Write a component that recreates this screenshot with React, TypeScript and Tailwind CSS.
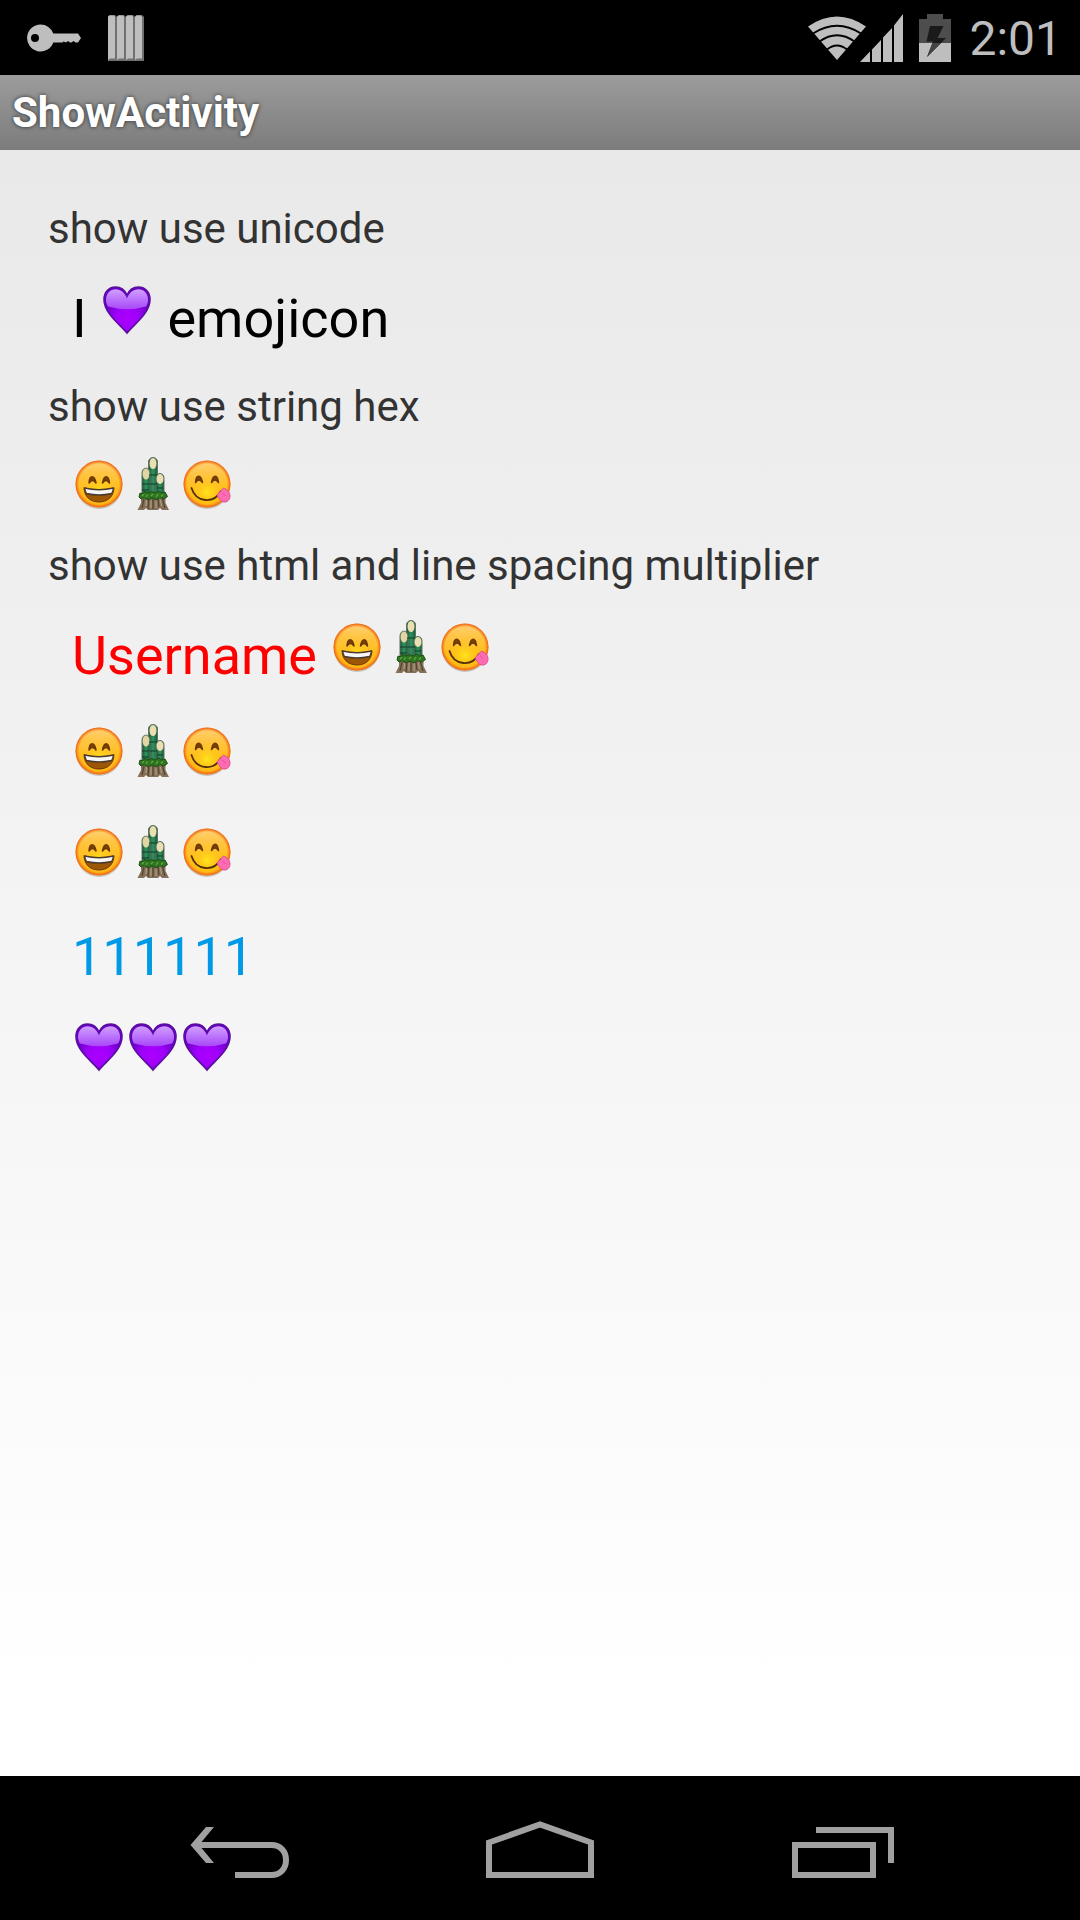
import React from "react";

function FaceBase() {
  return (
    <>
      <defs>
        <linearGradient id="faceFill" x1="0" y1="0" x2="0" y2="1">
          <stop offset="0" stopColor="#ffd27a" />
          <stop offset=".25" stopColor="#ffc648" />
          <stop offset=".6" stopColor="#ffbe1c" />
          <stop offset="1" stopColor="#ffb014" />
        </linearGradient>
        <radialGradient id="faceGlow" cx=".5" cy=".7" r=".4">
          <stop offset="0" stopColor="#ffec1c" stopOpacity=".85" />
          <stop offset="1" stopColor="#ffc010" stopOpacity="0" />
        </radialGradient>
        <radialGradient id="faceRim" cx=".5" cy=".5" r=".5">
          <stop offset=".84" stopColor="#fb8a1a" stopOpacity="0" />
          <stop offset=".95" stopColor="#f2701c" stopOpacity=".85" />
          <stop offset="1" stopColor="#e8641c" />
        </radialGradient>
      </defs>
      <ellipse cx="27" cy="29" rx="23" ry="23" fill="#000" opacity=".18" />
      <circle cx="27" cy="27" r="23.500" fill="url(#faceFill)" />
      <circle cx="27" cy="27" r="21" fill="url(#faceGlow)" />
      <circle cx="27" cy="27" r="23.500" fill="url(#faceRim)" />
    </>
  );
}

function Grin() {
  return (
    <svg viewBox="0 0 54 54" className="size-[54px] shrink-0" role="img" aria-label="smile">
      <FaceBase />
      <path d="M17 26C17.500 17.500 22.500 17.500 24 26C21.500 22.500 19.500 22.500 17 26Z" fill="#7a4208" stroke="#6b3805" strokeWidth="1.500" strokeLinejoin="round" />
      <path d="M30.500 26C32 17.500 36.500 17.500 37.500 26C35 22.500 33 22.500 30.500 26Z" fill="#7a4208" stroke="#6b3805" strokeWidth="1.500" strokeLinejoin="round" />
      <path d="M12 31Q27 34.500 42 31C41.500 40 35.500 45 27 45S12.500 40 12 31Z" fill="#9c5606" stroke="#6e3a04" strokeWidth="1" />
      <path d="M12.500 31Q27 34.500 41.500 31C41 34 40.500 35 39.500 36.500Q27 39.500 14.500 36.500C13.500 35 13 33 12.500 31Z" fill="#f7f7f7" stroke="#4a3a30" strokeWidth="1.300" />
    </svg>
  );
}

function Yum() {
  return (
    <svg viewBox="0 0 54 54" className="size-[54px] shrink-0" role="img" aria-label="yum">
      <FaceBase />
      <path d="M15.500 25.500C16 17 21 17 22.500 25.500C20 22 18 22 15.500 25.500Z" fill="#7a4208" stroke="#6b3805" strokeWidth="1.500" strokeLinejoin="round" />
      <path d="M31.500 25.500C33 17 37.500 17 38.500 25.500C36 22 34 22 31.500 25.500Z" fill="#7a4208" stroke="#6b3805" strokeWidth="1.500" strokeLinejoin="round" />
      <path d="M11.500 31C16 46 34 47 41 34" fill="none" stroke="#543005" strokeWidth="1.800" strokeLinecap="round" />
      <path d="M37 38L43.500 31C47 32.500 50 35 50 39C50 43 47 45.500 43.500 45C40.500 44 39 41.500 37 38Z" fill="#fb6cb2" stroke="#e0508f" strokeWidth="1" />
      <path d="M42 35.500L45.500 39" stroke="#e0508f" strokeWidth="1" />
    </svg>
  );
}

function Pine() {
  return (
    <svg viewBox="0 0 54 54" className="size-[54px] shrink-0" role="img" aria-label="pine decoration">
      <defs>
        <linearGradient id="stalk" x1="0" y1="0" x2="1" y2="0">
          <stop offset="0" stopColor="#1c5238" />
          <stop offset=".5" stopColor="#2f9560" />
          <stop offset="1" stopColor="#1a5838" />
        </linearGradient>
      </defs>
      <path d="M22.500 5C22.500-1 31.500-1 31.500 5V38H22.500Z" fill="url(#stalk)" stroke="#66705e" strokeWidth="1" />
      <path d="M16 16C16 9.500 24 9.500 24 16V38H16Z" fill="url(#stalk)" stroke="#66705e" strokeWidth="1" />
      <path d="M30 21C30 15 38 15 38 21V38H30Z" fill="url(#stalk)" stroke="#66705e" strokeWidth="1" />
      <ellipse cx="27" cy="6.500" rx="3.500" ry="5.500" fill="#eadfb2" />
      <ellipse cx="20" cy="17" rx="3.500" ry="5.500" fill="#e2d5a4" />
      <ellipse cx="34" cy="22" rx="3.500" ry="5" fill="#eadfb2" />
      <path d="M23 18H31M23.500 27H31M16 27H23M16 33H23M31 31H37" stroke="#0f3d28" strokeWidth="1" />
      <path d="M15 41V46L11.500 53H18L20 51L22 53H32L34 51L36 53H43L39.500 46V41Z" fill="#85705a" />
      <path d="M18 42L16 51M23 42L22 52M27 42V52M32 42L33 50M36.500 42L39 51" stroke="#54432f" strokeWidth="1.200" />
      <path d="M20.500 43L20 49M25 43V51M30 43V51M34.500 43L35.500 49" stroke="#b09c80" strokeWidth="1.200" />
      <path d="M13 40L14 36L17 37L19 34L22 36L26 34.500L29 36L33 34L36 36L39 35L41.500 39.500L38 42L34 40.500L30 43L26 41L22 43L18 40.500L15 42Z" fill="#2f7420" stroke="#1f4f16" strokeWidth="1" />
      <path d="M16 39L18 37M20 40L21.500 37.500M25 39L27 37M30 40L32 37M35 39.500L37 37.500" stroke="#5fae3c" strokeWidth="1.200" />
    </svg>
  );
}

function Heart() {
  return (
    <svg viewBox="0 0 54 54" className="size-[54px] shrink-0" role="img" aria-label="purple heart">
      <defs>
        <radialGradient id="heartFill" cx=".5" cy=".68" r=".5">
          <stop offset="0" stopColor="#ac00ff" />
          <stop offset=".5" stopColor="#9e00fa" />
          <stop offset="1" stopColor="#6a00c4" />
        </radialGradient>
        <linearGradient id="heartShine" x1="0" y1="0" x2="0" y2="1">
          <stop offset="0" stopColor="#d0a0ff" />
          <stop offset="1" stopColor="#a848f8" />
        </linearGradient>
      </defs>
      <path d="M27 50C22 43 4 31 4 16.500C4 8.500 9.500 4 15.500 4C21 4 25 7.500 27 12C29 7.500 33 4 38.500 4C44.500 4 50 8.500 50 16.500C50 31 32 43 27 50Z" fill="url(#heartFill)" stroke="#58109c" strokeWidth="1.600" />
      <path d="M6 17C6 10 10.500 6.200 15.500 6.200C21 6.200 25 10 27 15.500C29 10 33 6.200 38.500 6.200C43.500 6.200 48 10 48 17C48 20 47 22 46 23.500Q27 29 8 23.500C7 22 6 20 6 17Z" fill="url(#heartShine)" />
    </svg>
  );
}

function Faces() {
  return (
    <>
      <Grin />
      <Pine />
      <Yum />
    </>
  );
}

function StatusBar() {
  return (
    <header className="flex h-[75px] items-center justify-between bg-black pr-[18px] pl-[27px] text-[#bebebe]">
      <div className="flex items-center gap-[27px] pt-px">
        <svg viewBox="0 0 54 28" className="h-7 w-[54px]" fill="currentColor" aria-label="VPN">
          <path fillRule="evenodd" d="M13.500 0.500A13.500 13.500 0 0 1 26.300 9.500H51L54 14L51 18.500H48.500L46.500 17L44.500 18.500H43L41 17L39 18.500L36.500 17.500L35.500 18.500H26.300A13.500 13.500 0 1 1 13.500 0.500ZM8 10A4 4 0 1 0 8 18A4 4 0 0 0 8 10Z" />
        </svg>
        <svg viewBox="0 0 36 46" className="h-[46px] w-9" aria-label="Notification">
          {[0, 9, 18, 27].map((x) => (
            <g key={x}>
              <path d={`M${x} 1.500L${x + 2} 0H${x + 7}L${x + 9} 2V46H${x}Z`} fill="#707070" />
              <path d={`M${x} 2L${x + 1} 0.500H${x + 6}L${x + 7} 2V43.500H${x + 2}L${x} 45Z`} fill="#bebebe" />
            </g>
          ))}
        </svg>
      </div>
      <div className="flex items-center">
        <svg viewBox="0 0 96 48" className="h-12 w-24" fill="currentColor" aria-label="Wi-Fi and signal">
          <path d="M0 12.500Q29 -7.500 58 12.500L29 46Z" />
          <path d="M5 19.500Q29 4 53 19.500M11.500 27.500Q29 15 46.500 27.500M19 35.500Q29 27.500 39 35.500" fill="none" stroke="#000" strokeWidth="2" />
          <path d="M52 48L62 37.500V48ZM64 35.500L73 26V48H64ZM75 23.500L84 14V48H75ZM86 11.500L95 0V48H86Z" />
        </svg>
        <svg viewBox="0 0 32 48" className="ml-[15px] h-12 w-8" aria-label="Battery charging">
          <path d="M0 5H8V0H24V5H32V29H0Z" fill="#4d4d4d" />
          <path d="M0 29H32V48H0Z" fill="#bebebe" />
          <path d="M11 12H24.500L18.500 24H27L8 43L14 27.500H7.500Z" fill="#1a1a1a" />
          <path d="M13.500 29H22L8 43Z" fill="#444" />
        </svg>
        <time className="ml-[18px] pt-0.5 text-[48px] leading-[56px]">2:01</time>
      </div>
    </header>
  );
}

function Label({ children }: { children: React.ReactNode }) {
  return <h2 className="text-[42px] leading-[50px] text-[#333]">{children}</h2>;
}

function NavBar() {
  return (
    <nav className="flex h-36 items-center justify-center gap-[120px] bg-black text-[#a0a0a0]">
      <button type="button" aria-label="Back">
        <svg viewBox="0 0 168 144" className="h-36 w-[168px]" fill="none" stroke="currentColor" strokeWidth="6">
          <path d="M28 69H103.500C112 69 118 75 118 84S112 99 103.500 99H67" />
          <path d="M38 51H46L31 69L46 87H38L22.500 69Z" fill="currentColor" stroke="none" />
        </svg>
      </button>
      <button type="button" aria-label="Home">
        <svg viewBox="0 0 168 144" className="h-36 w-[168px]" fill="none" stroke="currentColor" strokeWidth="6">
          <path d="M33 99V66.500L84 48.500L135 66.500V99Z" />
        </svg>
      </button>
      <button type="button" aria-label="Recent apps">
        <svg viewBox="0 0 168 144" className="h-36 w-[168px]" fill="none" stroke="currentColor" strokeWidth="6">
          <path d="M51 69H129V99H51ZM72 54H147V87" />
        </svg>
      </button>
    </nav>
  );
}

export default function App() {
  return (
    <div className="flex min-h-screen flex-col font-[Roboto,sans-serif]">
      <StatusBar />
      <div className="flex h-[75px] items-center bg-linear-to-b from-[#9c9c9c] to-[#7c7c7c] px-3">
        <h1 className="text-[42px] leading-[50px] font-bold text-white [text-shadow:0_0_4px_#000000b0]">ShowActivity</h1>
      </div>
      <main className="flex grow flex-col bg-linear-to-b from-[#e9e9e9] to-white to-95% px-12 pt-[54px]">
        <Label>show use unicode</Label>
        <p className="mt-[29px] flex items-baseline px-6 text-[54px] leading-[72px] text-black">
          <span className="whitespace-pre">I </span>
          <Heart />
          <span className="whitespace-pre"> emojicon</span>
        </p>
        <div className="mt-[27px]">
          <Label>show use string hex</Label>
        </div>
        <p className="mt-[25px] flex px-6">
          <Faces />
        </p>
        <div className="mt-[30px]">
          <Label>show use html and line spacing multiplier</Label>
        </div>
        <p className="mt-[29px] flex items-baseline px-6 text-[54px] leading-[72px]">
          <span className="whitespace-pre text-[#f00]">Username </span>
          <Faces />
        </p>
        <p className="mt-8 flex px-6">
          <Faces />
        </p>
        <p className="mt-[47px] flex px-6">
          <Faces />
        </p>
        <p className="mt-[42px] px-6 text-[54px] leading-[72px] text-[#0099e5]">111111</p>
        <p className="mt-[27px] flex px-6">
          <Heart />
          <Heart />
          <Heart />
        </p>
      </main>
      <NavBar />
    </div>
  );
}
